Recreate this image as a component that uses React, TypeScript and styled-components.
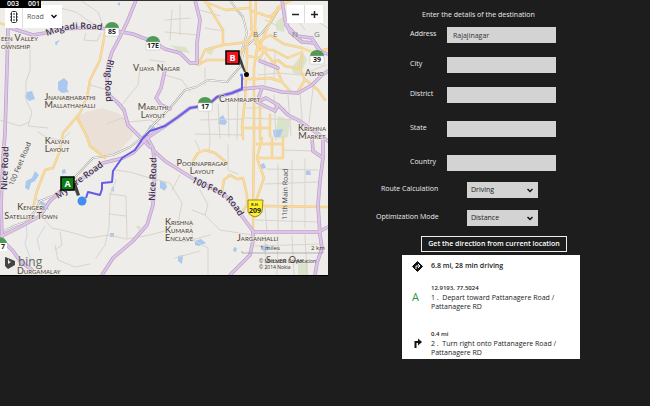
import React, { useState } from "react";
import styled, { createGlobalStyle } from "styled-components";

const GlobalStyle = createGlobalStyle`
  * { box-sizing: border-box; }
  body {
    margin: 0;
    min-height: 100vh;
    background: #1d1d1d;
    color: #ececec;
    font-family: "Open Sans", "Noto Sans", sans-serif;
    font-size: 8px;
    line-height: 14px;
  }
`;

const Page = styled.main`
  display: grid;
  grid-template-columns: minmax(0, 328fr) minmax(0, 322fr);
  align-items: start;
`;

const MapPane = styled.section`
  position: relative;
  overflow: hidden;
  border-bottom: 1px solid #000;
`;

const MapDrawing = styled.svg`
  display: block;
  width: 100%;
  height: auto;
  background: #eeedea;
`;

const FrameCounter = styled.div`
  position: absolute;
  top: 0;
  left: 0;
  display: flex;
  gap: 9px;
  padding: 0 1px 0 7px;
  background: #000;
  color: #fff;
  font: 600 7px/8px "Open Sans", sans-serif;
`;

const MapToolbar = styled.div`
  position: absolute;
  top: 5px;
  left: 5px;
  display: flex;
  height: 23px;
  background: #fff;
`;

const ZoomBar = styled(MapToolbar)`
  left: auto;
  right: 5px;
  height: 18px;
`;

const ToolButton = styled.button`
  display: flex;
  align-items: center;
  justify-content: center;
  width: 18px;
  padding: 0;
  border: 0;
  border-right: 1px solid #ddd;
  background: #fff;
  color: #222;
  &:last-child { border-right: 0; }
`;

const SelectBox = styled.div<{ $plain?: boolean }>`
  position: relative;
  display: flex;
  align-items: center;
  height: ${(p) => (p.$plain ? "auto" : "16px")};
  width: ${(p) => (p.$plain ? "39px" : "auto")};
  background: ${(p) => (p.$plain ? "#fff" : "#d3d3d3")};
  color: ${(p) => (p.$plain ? "#555" : "#222")};
`;

const NativeSelect = styled.select`
  appearance: none;
  width: 100%;
  height: 100%;
  padding: 0 4px;
  border: 0;
  background: transparent;
  color: inherit;
  font: 7px/14px "Open Sans", sans-serif;
`;

const Chevron = styled.svg`
  position: absolute;
  right: 5px;
  width: 6px;
  height: 5px;
  pointer-events: none;
`;

const Planner = styled.form`
  width: 204px;
  max-width: 100%;
  margin-left: 48px;
  padding-top: 8px;
`;

const Title = styled.h1`
  margin: 0 0 5px 46px;
  font-size: 7px;
  font-weight: 400;
  line-height: 14px;
  white-space: nowrap;
`;

const Group = styled.div<{ $gap: number; $after: number }>`
  display: flex;
  flex-direction: column;
  gap: ${(p) => p.$gap}px;
  margin-bottom: ${(p) => p.$after}px;
`;

const FieldRow = styled.div`
  display: grid;
  grid-template-columns: 37px 109px;
  align-items: start;
  margin-left: 34px;
`;

const OptionRow = styled.div`
  display: grid;
  grid-template-columns: 91px 71px;
  align-items: start;
`;

const FieldLabel = styled.label<{ $indent?: boolean }>`
  padding-left: ${(p) => (p.$indent ? "5px" : "0")};
  font-size: 7px;
  line-height: 14px;
  white-space: nowrap;
`;

const TextBox = styled.input`
  width: 100%;
  height: 16px;
  padding: 0 6px;
  border: 0;
  border-radius: 0;
  background: #d3d3d3;
  color: #333;
  font: 7px/14px "Open Sans", sans-serif;
`;

const SubmitButton = styled.button`
  display: block;
  width: 146px;
  height: 16px;
  margin: 0 0 3px 45px;
  padding: 0;
  border: 1px solid #eee;
  background: transparent;
  color: #fff;
  font: 600 7px/12px "Open Sans", sans-serif;
  white-space: nowrap;
`;

const Results = styled.section`
  margin-left: 26px;
  padding: 4px 0 2px 8px;
  background: #fff;
  color: #222;
`;

const Step = styled.div<{ $after: number }>`
  display: grid;
  grid-template-columns: 21px 1fr;
  align-items: center;
  margin-bottom: ${(p) => p.$after}px;
`;

const StepIcon = styled.svg`
  width: 14px;
  height: 14px;
`;

const StartLetter = styled.span`
  padding-left: 2px;
  color: #2c9a38;
  font-size: 11px;
`;

const Summary = styled.h2`
  margin: 0;
  font-size: 7px;
  font-weight: 600;
  line-height: 14px;
`;

const Distance = styled.div`
  font-size: 6px;
  font-weight: 600;
  line-height: 10px;
`;

const Instruction = styled.p`
  margin: 0;
  font-size: 7px;
  line-height: 9px;
  white-space: pre-line;
`;

const Area = styled.g`
  font-family: "Lato", sans-serif;
  font-variant: small-caps;
  font-size: 9px;
  font-weight: 500;
  fill: #554b40;
  stroke: #f2f0ec;
  stroke-width: 1px;
  paint-order: stroke;
`;

const RoadNames = styled.g`
  font-family: "Open Sans", sans-serif;
  font-weight: 600;
  font-size: 9px;
  fill: #3c3045;
  stroke: #f0eaf2;
  stroke-width: 1px;
  paint-order: stroke;
`;

const MapText = styled.text<{ $size: number; $color: string; $weight?: number }>`
  font-family: "Open Sans", sans-serif;
  font-size: ${(p) => p.$size}px;
  font-weight: ${(p) => p.$weight ?? 400};
  fill: ${(p) => p.$color};
`;

const highways = [
  "M8 24L7 67L5 133L3 158L1 205L2 238",
  "M8 27L20 31L33 35L45 33L60 29L85 28L100 28L112 30L122 32L133 34L143 38L152 41L165 49L180 53L190 63L197 63",
  "M136 0L128 20L122 33L112 52L108 65L107 80L109 95L118 103L124 110L128 125L140 137L150 147",
  "M195 0L200 20L197 43L197 63",
  "M165 70L161 88L156 98L161 105L170 109",
  "M147 137L153 148L155 171L153 205L147 225L133 241L113 258L102 275",
  "M153 150L165 161L192 178L225 195L238 211L253 231L253 241L250 255L230 275",
  "M253 232L318 232L328 227",
  "M0 237L20 227L40 216L50 201L63 190L83 178L103 163L123 158L133 153L147 138L165 126L178 117L190 108L208 105L217 97L232 93L242 89",
  "M0 238L13 251L20 261L32 270",
  "M242 89L262 87L282 92L298 93L312 85L322 75L328 71",
  "M282 0L285 20L290 32L302 42L315 43L321 52L328 54",
  "M286 25L297 36L312 38L318 49",
  "M262 88L257 102L275 111L278 105L288 115L298 120L314 131L328 141",
  "M257 102L266 98L278 105",
  "M260 61L278 68",
  "M312 138L313 151L323 158L320 181L318 205L320 235L322 248L317 263L315 275",
  "M323 138L323 158",
];

const arterials = [
  "M0 23L8 26",
  "M105 33L100 60L90 80L87 97L80 113L63 133L60 151L53 168L45 170L37 191L33 208",
  "M77 117L87 137L90 146L105 158",
  "M205 0L215 17L223 30L223 45L205 50L198 65L207 60L232 60L244 49",
  "M222 45L240 43L248 41",
  "M205 2L226 10L248 8",
  "M250 0L252 33L247 43L247 60L246 80L245 100L242 127L243 139",
  "M256 0L255 28L258 43L254 68L254 140L253 205L253 231",
  "M251 28L257 43L275 64L282 82L290 91",
  "M258 50L268 27L278 7L292 0",
  "M252 11L270 17L283 5",
  "M255 44L270 35L284 44L302 48L312 52L328 49",
  "M257 50L273 50L288 58L302 52",
  "M302 52L300 69L305 80L298 91",
  "M269 65L278 60L285 66L300 69",
  "M247 56L260 58L266 48L258 45",
  "M242 128L270 128M260 96L260 139M270 115L270 136",
  "M262 138L257 158L283 158L283 138M272 138L272 158M257 144L283 144",
  "M257 158L264 178L257 198L253 205",
  "M262 206L328 207",
  "M222 192L224 180L230 175L237 179L243 178L247 195L247 205L240 215",
  "M193 161L198 153L205 150L215 153L227 163",
  "M282 82L270 78L257 79L244 79",
  "M325 100L318 90L306 80",
];

const lanes = [
  "M30 45L30 70L26 82L26 100L32 112L28 126L48 128",
  "M80 0L98 12L103 26",
  "M86 33L84 40L97 41L101 33",
  "M150 60L165 62M140 68L138 85L128 97L122 105",
  "M107 124L122 118L129 122L150 120L162 126",
  "M103 28L90 22L76 12L60 8",
  "M0 120L20 126L29 122",
  "M90 85L108 90",
  "M86 98L70 100L55 97L45 100",
  "M116 180L110 195L109 228L105 245L96 258",
  "M109 194L126 196L127 238M109 214L126 216",
  "M43 218L52 228L70 232L90 238L108 235L127 239L150 235L165 231",
  "M115 170L130 172L150 178L170 183L182 203L178 224",
  "M165 20L190 18M165 32L198 35M172 10L170 40M180 5L180 35",
  "M200 10L220 16M205 28L223 31M165 75L182 80L190 92M205 68L205 85",
  "M208 108L210 140M218 104L220 138M228 99L229 137M238 92L237 139",
  "M200 120L243 119M195 134L242 135M247 108L285 108M245 118L300 120",
  "M274 95L276 140M288 95L291 135M300 91L303 132M313 88L309 123",
  "M258 75L278 73L301 75L326 65M265 58L265 85M275 50L274 80",
  "M205 215L220 230L252 235M190 220L193 240L208 248L208 275",
  "M165 240L185 242L210 235M175 258L200 251",
  "M265 235L266 270M278 236L277 275M292 236L294 275M305 235L307 275",
  "M255 246L320 244M255 220L320 222M265 207L267 232M278 164L278 230M292 160L292 232M305 159L305 228",
  "M267 169L318 170M265 184L318 182M283 150L313 151",
  "M200 190L208 205L205 215L192 210M180 175L172 190",
  "M228 145L228 170L238 174M210 141L209 151M195 140L200 151",
  "M290 10L305 30M302 12L328 28M265 20L278 26",
  "M55 245L58 260L75 267L90 264M60 232L62 245L55 250",
  "M70 132L62 140L48 138L38 132",
];

const railways = [
  "M230 0L236 9L243 17L247 33L242 50L242 67",
  "M278 10L271 22L262 33L250 43L245 47L240 67L227 82L208 80L196 87L185 90L176 101L168 110L154 124L143 137L130 147L113 155L93 158L75 177L55 195L40 201L35 211L26 222L14 226L0 233",
];

const waters = [
  "M58 82L64 78L68 82L67 89L69 92L62 93L58 90Z",
  "M27 92L32 91L35 99L29 101L25 97Z",
  "M55 42L60 40L57 44L56 46Z",
  "M48 24L56 24L53 29L48 28Z",
  "M117 4L120 2L120 6Z",
  "M26 181L32 178L35 171L39 175L35 181L31 183L29 190L25 188Z",
  "M62 170L65 169L66 173L62 174Z",
  "M36 199L45 203L49 210L43 207Z",
  "M160 180L165 183L165 191L160 188Z",
  "M112 187L114 187L114 192L111 190Z",
  "M150 125L155 127L153 131L148 129Z",
  "M219 118L223 115L227 122L225 125L218 124Z",
  "M273 130L283 129L280 137L274 137Z",
  "M195 241L201 239L206 243L199 246L195 245Z",
  "M178 256L183 255L182 264L178 261Z",
  "M261 246L267 244L270 249L264 252Z",
  "M306 171L310 170L311 175L306 175Z",
  "M260 165L264 163L266 168L261 169Z",
  "M165 181L167 187L165 190Z",
  "M234 247L237 248L236 252L233 251Z",
  "M110 233L114 233L114 237L110 237Z",
];

const parks = [
  "M276 22L286 14L284 32L276 30Z",
  "M292 67L303 53L307 60L300 75L293 73Z",
  "M170 45L185 47L190 53L178 51Z",
  "M278 116L290 120L288 137L275 139Z",
  "M298 263L308 262L308 275L298 275Z",
  "M136 226L141 226L139 231Z",
  "M208 47L214 50L211 55L207 53Z",
];

const Strokes = ({ paths, color, width }: { paths: string[]; color: string; width: number }) => (
  <g fill="none" stroke={color} strokeWidth={width} strokeLinejoin="round" strokeLinecap="round">
    {paths.map((d) => <path key={d} d={d} />)}
  </g>
);

const Shield = ({ x, y, label }: { x: number; y: number; label: string }) => (
  <g transform={`translate(${x} ${y})`}>
    <path d="M-7 0A7 6 0 0 1 7 0Z" fill="#4f9a55" />
    <rect x="-7" y="0" width="14" height="8" rx="1" fill="#fff" stroke="#bbb" strokeWidth=".5" />
    <MapText $size={7} $color="#222" $weight={700} y="6" textAnchor="middle">{label}</MapText>
  </g>
);

const Pin = ({ x, y, label, color, tail }: { x: number; y: number; label: string; color: string; tail: string }) => (
  <g transform={`translate(${x} ${y})`}>
    <path d={tail} fill="#3e4540" />
    <rect x="1" y="1" width="13" height="13" fill={color} stroke="#000" strokeWidth="1.5" />
    <MapText $size={9} $color="#fff" $weight={700} x="7.5" y="11" textAnchor="middle">{label}</MapText>
  </g>
);

const RoadMap = () => (
  <MapDrawing viewBox="0 0 328 275" role="img" aria-label="Route map">
    <defs>
      <path id="magadi" d="M47 36Q72 25 108 31" />
      <path id="ring" d="M108 59Q103 78 107 108" />
      <path id="feet" d="M191 182L208 190Q228 195 242 222" />
      <path id="mysore" d="M58 199L108 163" />
    </defs>
    <path d="M75 118L86 112L102 108L120 114L130 124L133 136L118 152L106 156L92 149L87 138Z" fill="#eae0d8" />
    <g fill="#d8e3ca">{parks.map((d) => <path key={d} d={d} />)}</g>
    <g fill="#a9c9ee">{waters.map((d) => <path key={d} d={d} />)}</g>
    <path d="M26 222L27 235L25 243L29 255L35 267M45 226L37 239L40 251" fill="none" stroke="#c9dbe8" />
    <Strokes paths={lanes} color="#d9d4ca" width={1} />
    <Strokes paths={railways} color="#aaa9a4" width={2} />
    <Strokes paths={railways} color="#fbfbf8" width={1} />
    <Strokes paths={arterials} color="#ecc987" width={2.4} />
    <Strokes paths={arterials} color="#fbdc9e" width={1.4} />
    <Strokes paths={highways} color="#bd9fcc" width={3.6} />
    <Strokes paths={highways} color="#dcc6e5" width={2.2} />
    <path
      d="M86 198L88 192L100 195L102 189L102 183L112 182L113 171L122 158L135 150L143 138L150 131L165 126L178 117L190 108L208 105L217 97L232 93L242 89L242 75"
      fill="none" stroke="#665be6" strokeWidth="2" strokeLinejoin="round"
    />
    <Area>
      <text x="1" y="41">een Valley</text>
      <text x="1" y="49">ownship</text>
      <text x="133" y="71">Vijaya Nagar</text>
      <text x="70" y="100" textAnchor="middle">Jnanabharathi</text>
      <text x="70" y="108" textAnchor="middle">Mallathahalli</text>
      <text x="153" y="110" textAnchor="middle">Maruthi</text>
      <text x="153" y="118" textAnchor="middle">Layout</text>
      <text x="57" y="144" textAnchor="middle">Kalyan</text>
      <text x="57" y="152" textAnchor="middle">Layout</text>
      <text x="31" y="210" textAnchor="middle">Kengeri</text>
      <text x="31" y="219" textAnchor="middle">Satellite Town</text>
      <text x="219" y="102">Chamrajpet</text>
      <text x="305" y="76">Asho</text>
      <text x="312" y="131" textAnchor="middle">Krishna</text>
      <text x="312" y="139" textAnchor="middle">Market</text>
      <text x="202" y="166" textAnchor="middle">Poornapragap</text>
      <text x="202" y="174" textAnchor="middle">Layout</text>
      <text x="165" y="225">Krishna</text>
      <text x="165" y="233">Kumara</text>
      <text x="165" y="241">Enclave</text>
      <text x="237" y="241">Jarganhalli</text>
      <text x="17" y="274">Durgamalay</text>
      <text x="266" y="263">Silver Oak</text>
    </Area>
    {[["B", 253], ["E", 273], ["N", 292], ["G", 314]].map(([c, x]) => (
      <MapText key={c} $size={8} $color="#777" x={x} y="37">{c}</MapText>
    ))}
    <RoadNames>
      <text><textPath href="#magadi">Magadi Road</textPath></text>
      <text><textPath href="#ring">Ring Road</textPath></text>
      <text><textPath href="#feet">100 Feet Road</textPath></text>
      <text><textPath href="#mysore">Mysore Road</textPath></text>
      <text transform="translate(155 201) rotate(-88)">Nice Road</text>
      <text transform="translate(7 190) rotate(-88)">Nice Road</text>
    </RoadNames>
    <MapText $size={7} $color="#444" transform="translate(13 186) rotate(-67)">100 Feet Road</MapText>
    <MapText $size={7} $color="#444" transform="translate(287 220) rotate(-89)">11th Main Road</MapText>
    <Shield x={112} y={28} label="85" />
    <Shield x={153} y={42} label="17E" />
    <Shield x={205} y={103} label="17" />
    <Shield x={317} y={56} label="39" />
    <g>
      <path d="M0 237Q6 238 7 243H0Z" fill="#4f9a55" />
      <path d="M0 243H7V251H0Z" fill="#fff" />
      <MapText $size={7} $color="#222" $weight={700} x="1" y="249">7</MapText>
    </g>
    <path d="M248 200H263L262 212Q260 216 255 217Q250 216 248 212Z" fill="#fff02a" stroke="#99891a" />
    <MapText $size={4} $color="#333" $weight={700} x="255" y="206" textAnchor="middle">R.H.</MapText>
    <MapText $size={7} $color="#222" $weight={700} x="255" y="213" textAnchor="middle">209</MapText>
    <Pin x={225} y={50} label="B" color="#f0141e" tail="M11 5L19 22L21 22L15 5Z" />
    <circle cx="246.500" cy="74.500" r="2.500" fill="#000" />
    <circle cx="241.500" cy="75" r="1.500" fill="#438cf0" />
    <Pin x={60} y={176} label="A" color="#087d13" tail="M12 7L17 20L20 19L16 7Z" />
    <circle cx="82" cy="201" r="4.500" fill="#438cf0" />
    <path d="M5 257L8 258V264L11 262L9 261L8 258L15 261V265L8 269L5 266Z" fill="#444" />
    <MapText $size={12} $color="#666" x="18" y="266">bing</MapText>
    <path d="M242 251V253H323V251" fill="none" stroke="#999" strokeWidth=".7" />
    <MapText $size={6} $color="#333" x="260" y="250">1 miles</MapText>
    <MapText $size={6} $color="#333" x="311" y="250">2 km</MapText>
    <MapText $size={5} $color="#333" x="259" y="263">© Microsoft Corporation</MapText>
    <MapText $size={5} $color="#333" x="259" y="269">© 2014 Nokia</MapText>
    <path d="M0 .5H328" stroke="#333" />
  </MapDrawing>
);

const ChevronIcon = () => (
  <Chevron viewBox="0 0 6 5" aria-hidden="true">
    <path d="M.5 1L3 3.500L5.500 1" fill="none" stroke="#111" strokeWidth="1.500" />
  </Chevron>
);

const Dropdown = ({ id, options }: { id: string; options: string[] }) => (
  <SelectBox>
    <NativeSelect id={id}>{options.map((o) => <option key={o}>{o}</option>)}</NativeSelect>
    <ChevronIcon />
  </SelectBox>
);

type Address = Record<string, string>;

export default function App() {
  const [address, setAddress] = useState<Address>({ Address: "Rajajinagar" });
  const field = (name: string) => (
    <FieldRow key={name}>
      <FieldLabel htmlFor={name}>{name}</FieldLabel>
      <TextBox
        id={name}
        value={address[name] ?? ""}
        onChange={(e) => setAddress({ ...address, [name]: e.target.value })}
      />
    </FieldRow>
  );

  return (
    <>
      <GlobalStyle />
      <Page>
        <MapPane>
          <RoadMap />
          <MapToolbar>
            <ToolButton type="button" aria-label="Traffic">
              <svg width="8" height="12" viewBox="0 0 8 12" fill="none" stroke="#333">
                <rect x="1.500" y=".5" width="5" height="11" rx="1" />
                <path d="M3 3H5M3 6H5M3 9H5M0 3H1M0 6H1M0 9H1M7 3H8M7 6H8M7 9H8" />
              </svg>
            </ToolButton>
            <SelectBox $plain>
              <NativeSelect aria-label="Map style"><option>Road</option><option>Aerial</option></NativeSelect>
              <ChevronIcon />
            </SelectBox>
          </MapToolbar>
          <FrameCounter><span>003</span><span>001</span></FrameCounter>
          <ZoomBar>
            <ToolButton type="button" aria-label="Zoom out">
              <svg width="7" height="7" viewBox="0 0 7 7"><path d="M0 3.500H7" stroke="#222" strokeWidth="1.500" /></svg>
            </ToolButton>
            <ToolButton type="button" aria-label="Zoom in">
              <svg width="7" height="7" viewBox="0 0 7 7"><path d="M0 3.500H7M3.500 0V7" stroke="#222" strokeWidth="1.500" /></svg>
            </ToolButton>
          </ZoomBar>
        </MapPane>

        <Planner onSubmit={(e) => e.preventDefault()}>
          <Title>Enter the details of the destination</Title>
          <Group $gap={14} $after={18}>{["Address", "City", "District"].map(field)}</Group>
          <Group $gap={18} $after={11}>{["State", "Country"].map(field)}</Group>
          <Group $gap={12} $after={10}>
            <OptionRow>
              <FieldLabel $indent htmlFor="route">Route Calculation</FieldLabel>
              <Dropdown id="route" options={["Driving", "Walking"]} />
            </OptionRow>
            <OptionRow>
              <FieldLabel htmlFor="mode">Optimization Mode</FieldLabel>
              <Dropdown id="mode" options={["Distance", "Time"]} />
            </OptionRow>
          </Group>
          <SubmitButton type="submit">Get the direction from current location</SubmitButton>
          <Results>
            <Step $after={10}>
              <StepIcon viewBox="0 0 14 14" aria-hidden="true">
                <path d="M7.500 2.500L12.500 7.500L7.500 12.500L2.500 7.500Z" fill="#111" stroke="#111" strokeLinejoin="round" />
                <path d="M6 10V7H9.500M8 5L10 7L8 9" fill="none" stroke="#fff" />
              </StepIcon>
              <Summary>6.8 mi, 28 min driving</Summary>
            </Step>
            <Step $after={18}>
              <StartLetter>A</StartLetter>
              <div>
                <Distance>12.9193, 77.5024</Distance>
                <Instruction>{"1 .\u00a0 Depart toward Pattanagere Road /\nPattanagere RD"}</Instruction>
              </div>
            </Step>
            <Step $after={0}>
              <StepIcon viewBox="0 0 14 14" aria-hidden="true">
                <path d="M5.500 12V6H9" fill="none" stroke="#111" strokeWidth="2" />
                <path d="M8 2.500L12 6L8 9.500Z" fill="#111" />
              </StepIcon>
              <div>
                <Distance>0.4 mi</Distance>
                <Instruction>{"2 .\u00a0 Turn right onto Pattanagere Road /\nPattanagere RD"}</Instruction>
              </div>
            </Step>
          </Results>
        </Planner>
      </Page>
    </>
  );
}
